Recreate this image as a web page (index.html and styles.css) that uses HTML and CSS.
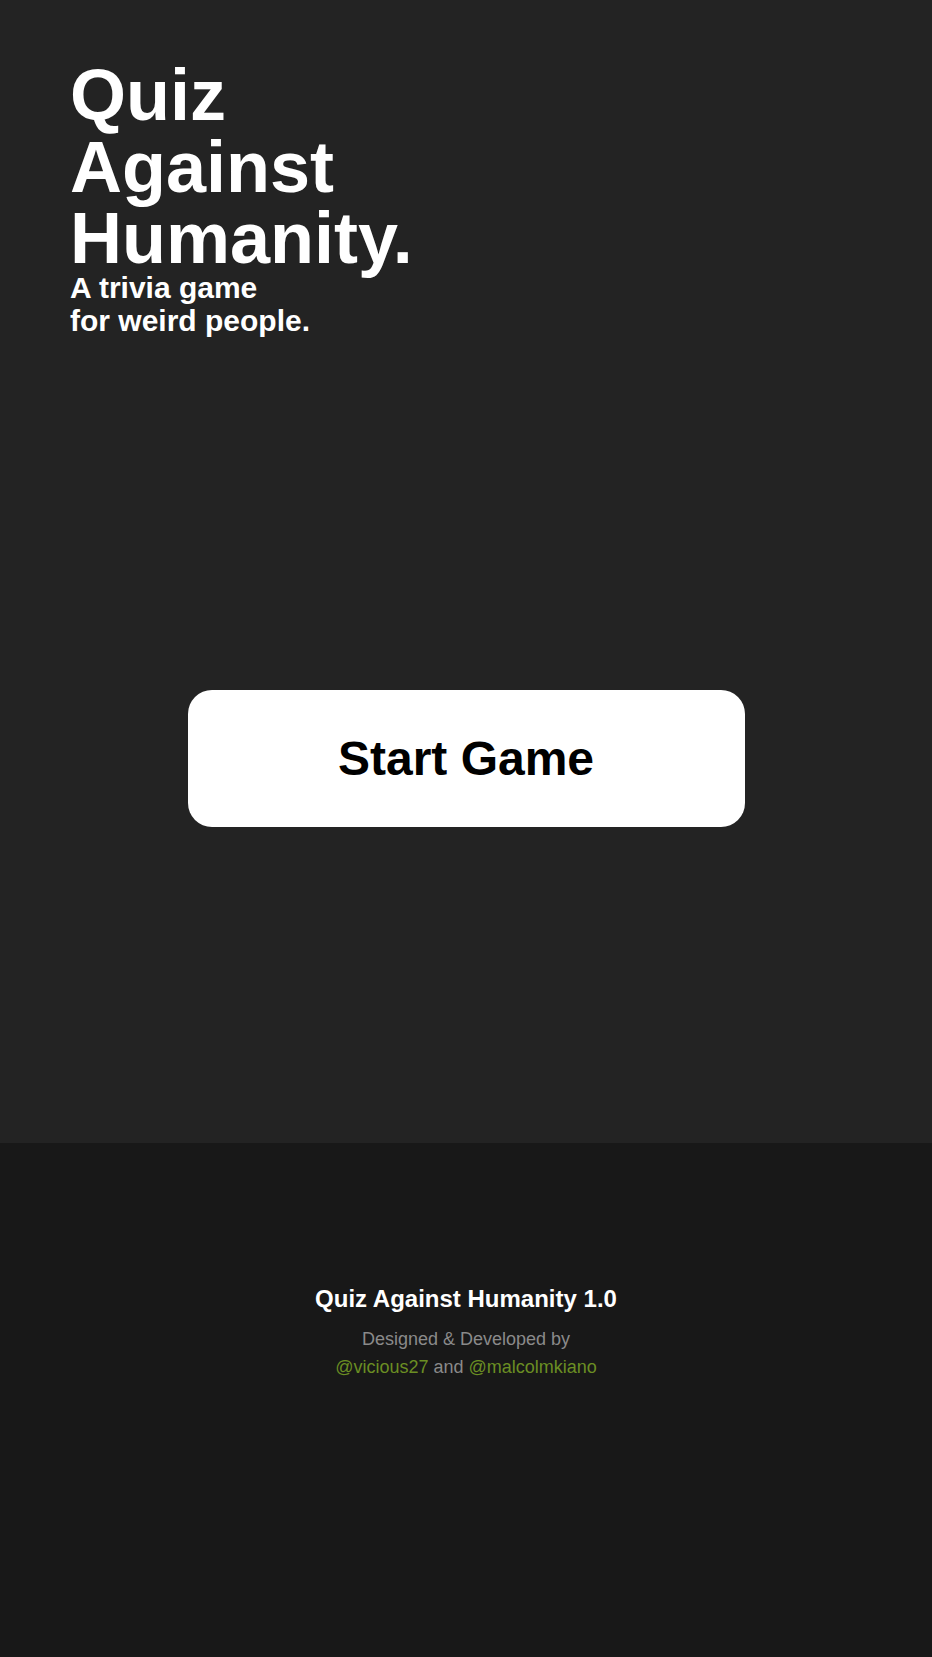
FILE: index.html
```html
<!DOCTYPE html>
<html lang="en">
<head>
<meta charset="utf-8">
<title>Quiz Against Humanity</title>
<link rel="stylesheet" href="styles.css">
</head>
<body>
  <main class="hero">
    <header class="brand">
      <h1 class="brand-title">Quiz<br>Against<br>Humanity.</h1>
      <p class="brand-tagline">A trivia game<br>for weird people.</p>
    </header>
    <div class="actions">
      <button class="start-btn" type="button">Start Game</button>
    </div>
  </main>
  <footer class="site-footer">
    <h2 class="footer-title">Quiz Against Humanity 1.0</h2>
    <p class="footer-credits">Designed &amp; Developed by<br><a class="credit-link" href="#">@vicious27</a> and <a class="credit-link" href="#">@malcolmkiano</a></p>
  </footer>
</body>
</html>
```
FILE: styles.css
```css
* { box-sizing: border-box; }

html, body {
  margin: 0;
  padding: 0;
}

body {
  font-family: "Liberation Sans", Arial, Helvetica, sans-serif;
  background: #181818;
  color: #fff;
}

.hero {
  height: 1143px;
  background: #232323;
  padding: 60px 70px 0;
  display: flex;
  flex-direction: column;
}

.brand-title {
  margin: 0;
  font-size: 72px;
  line-height: 71.5px;
  font-weight: 700;
  color: #fff;
}

.brand-tagline {
  margin: -4px 0 0;
  font-size: 30px;
  line-height: 33.6px;
  font-weight: 700;
  color: #fff;
}

.actions {
  margin-top: 352px;
  display: flex;
  justify-content: center;
}

.start-btn {
  width: 557px;
  height: 137px;
  border: none;
  border-radius: 24px;
  background: #fff;
  color: #000;
  font-family: "Liberation Sans", Arial, Helvetica, sans-serif;
  font-size: 48px;
  font-weight: 700;
  cursor: pointer;
  display: flex;
  align-items: center;
  justify-content: center;
  padding: 0;
}

.site-footer {
  height: 514px;
  background: #181818;
  padding-top: 142px;
  text-align: center;
}

.footer-title {
  margin: 0;
  font-size: 24px;
  font-weight: 700;
  line-height: normal;
  color: #fff;
}

.footer-credits {
  margin: 12px 0 0;
  font-size: 18px;
  line-height: 28px;
  color: #8a8a8a;
}

.credit-link {
  color: #6b8e23;
  text-decoration: none;
}
```
